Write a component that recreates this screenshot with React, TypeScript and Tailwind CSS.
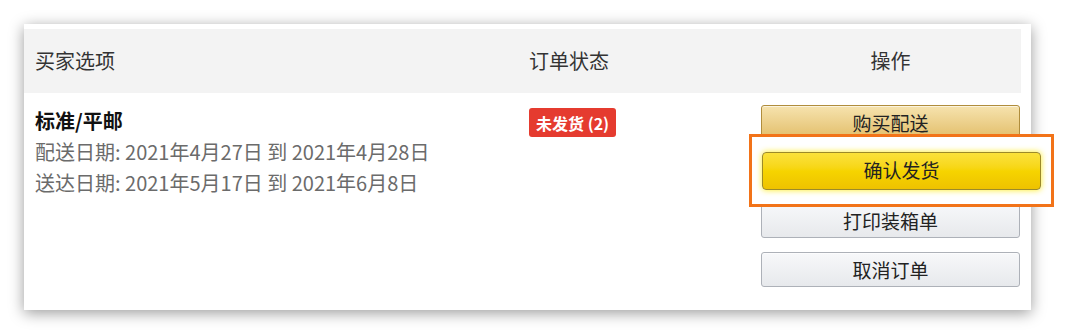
const BUTTONS = [
  { label: "购买配送", kind: "primary", hidden: false },
  { label: "确认发货", kind: "primary", hidden: true },
  { label: "打印装箱单", kind: "secondary", hidden: false },
  { label: "取消订单", kind: "secondary", hidden: false },
] as const;

const BTN_STYLE = {
  primary:
    "border-[#b08d3c] bg-gradient-to-b from-[#f6e3ae] to-[#e2bd67] text-[#222]",
  secondary:
    "border-[#adb1b8] bg-gradient-to-b from-[#f7f8fa] to-[#e7e9ec] text-[#222]",
};

export default function App() {
  return (
    <div
      className="h-[334px] w-[1080px] bg-white pl-6 pt-6"
      style={{ fontFamily: '"Noto Sans CJK SC", "Noto Sans", sans-serif' }}
    >
      <div className="h-[286px] w-[1007px] bg-white pr-[10px] pt-[5px] shadow-[0_3px_14px_rgba(0,0,0,0.4)]">
        {/* header */}
        <div className="flex h-16 items-center bg-[#f3f3f3] text-[20px] text-[#333]">
          <div className="w-[505px] pl-[11px]">买家选项</div>
          <div className="w-[232px]">订单状态</div>
          <div className="w-[259px] text-center">操作</div>
        </div>

        {/* row */}
        <div className="flex pt-3">
          <div className="w-[505px] pl-[11px] text-[20px] leading-[31px]">
            <div className="font-bold text-[#111]">标准/平邮</div>
            <div className="text-[#6b6b6b]">配送日期: 2021年4月27日 到 2021年4月28日</div>
            <div className="text-[#6b6b6b]">送达日期: 2021年5月17日 到 2021年6月8日</div>
          </div>
          <div className="w-[232px] pt-[3px]">
            <span className="inline-flex h-[29px] items-center rounded-[3px] bg-[#e53b2f] px-[7px] text-[16px] font-bold text-white">
              未发货 (2)
            </span>
          </div>
          <div className="relative flex w-[259px] flex-col gap-[14px]">
            {BUTTONS.map((b) => (
              <button
                key={b.label}
                className={`h-[35px] w-full rounded-[3px] border text-[19px] leading-none shadow-[inset_0_1px_0_rgba(255,255,255,0.6)] ${BTN_STYLE[b.kind]} ${b.hidden ? "invisible" : ""}`}
              >
                {b.label}
              </button>
            ))}

            {/* highlighted callout */}
            <div className="absolute left-[-12px] top-[29px] flex h-[73px] w-[305px] items-center border-[3px] border-[#f27318] bg-white pl-[10px]">
              <button className="h-[38px] w-[279px] rounded-[4px] border border-[#9c8a2a] bg-gradient-to-b from-[#fbe23a] via-[#f6d400] to-[#eec200] text-[19px] text-[#222] shadow-[0_0_6px_rgba(255,235,0,0.9)]">
                确认发货
              </button>
            </div>
          </div>
        </div>
      </div>
    </div>
  );
}
